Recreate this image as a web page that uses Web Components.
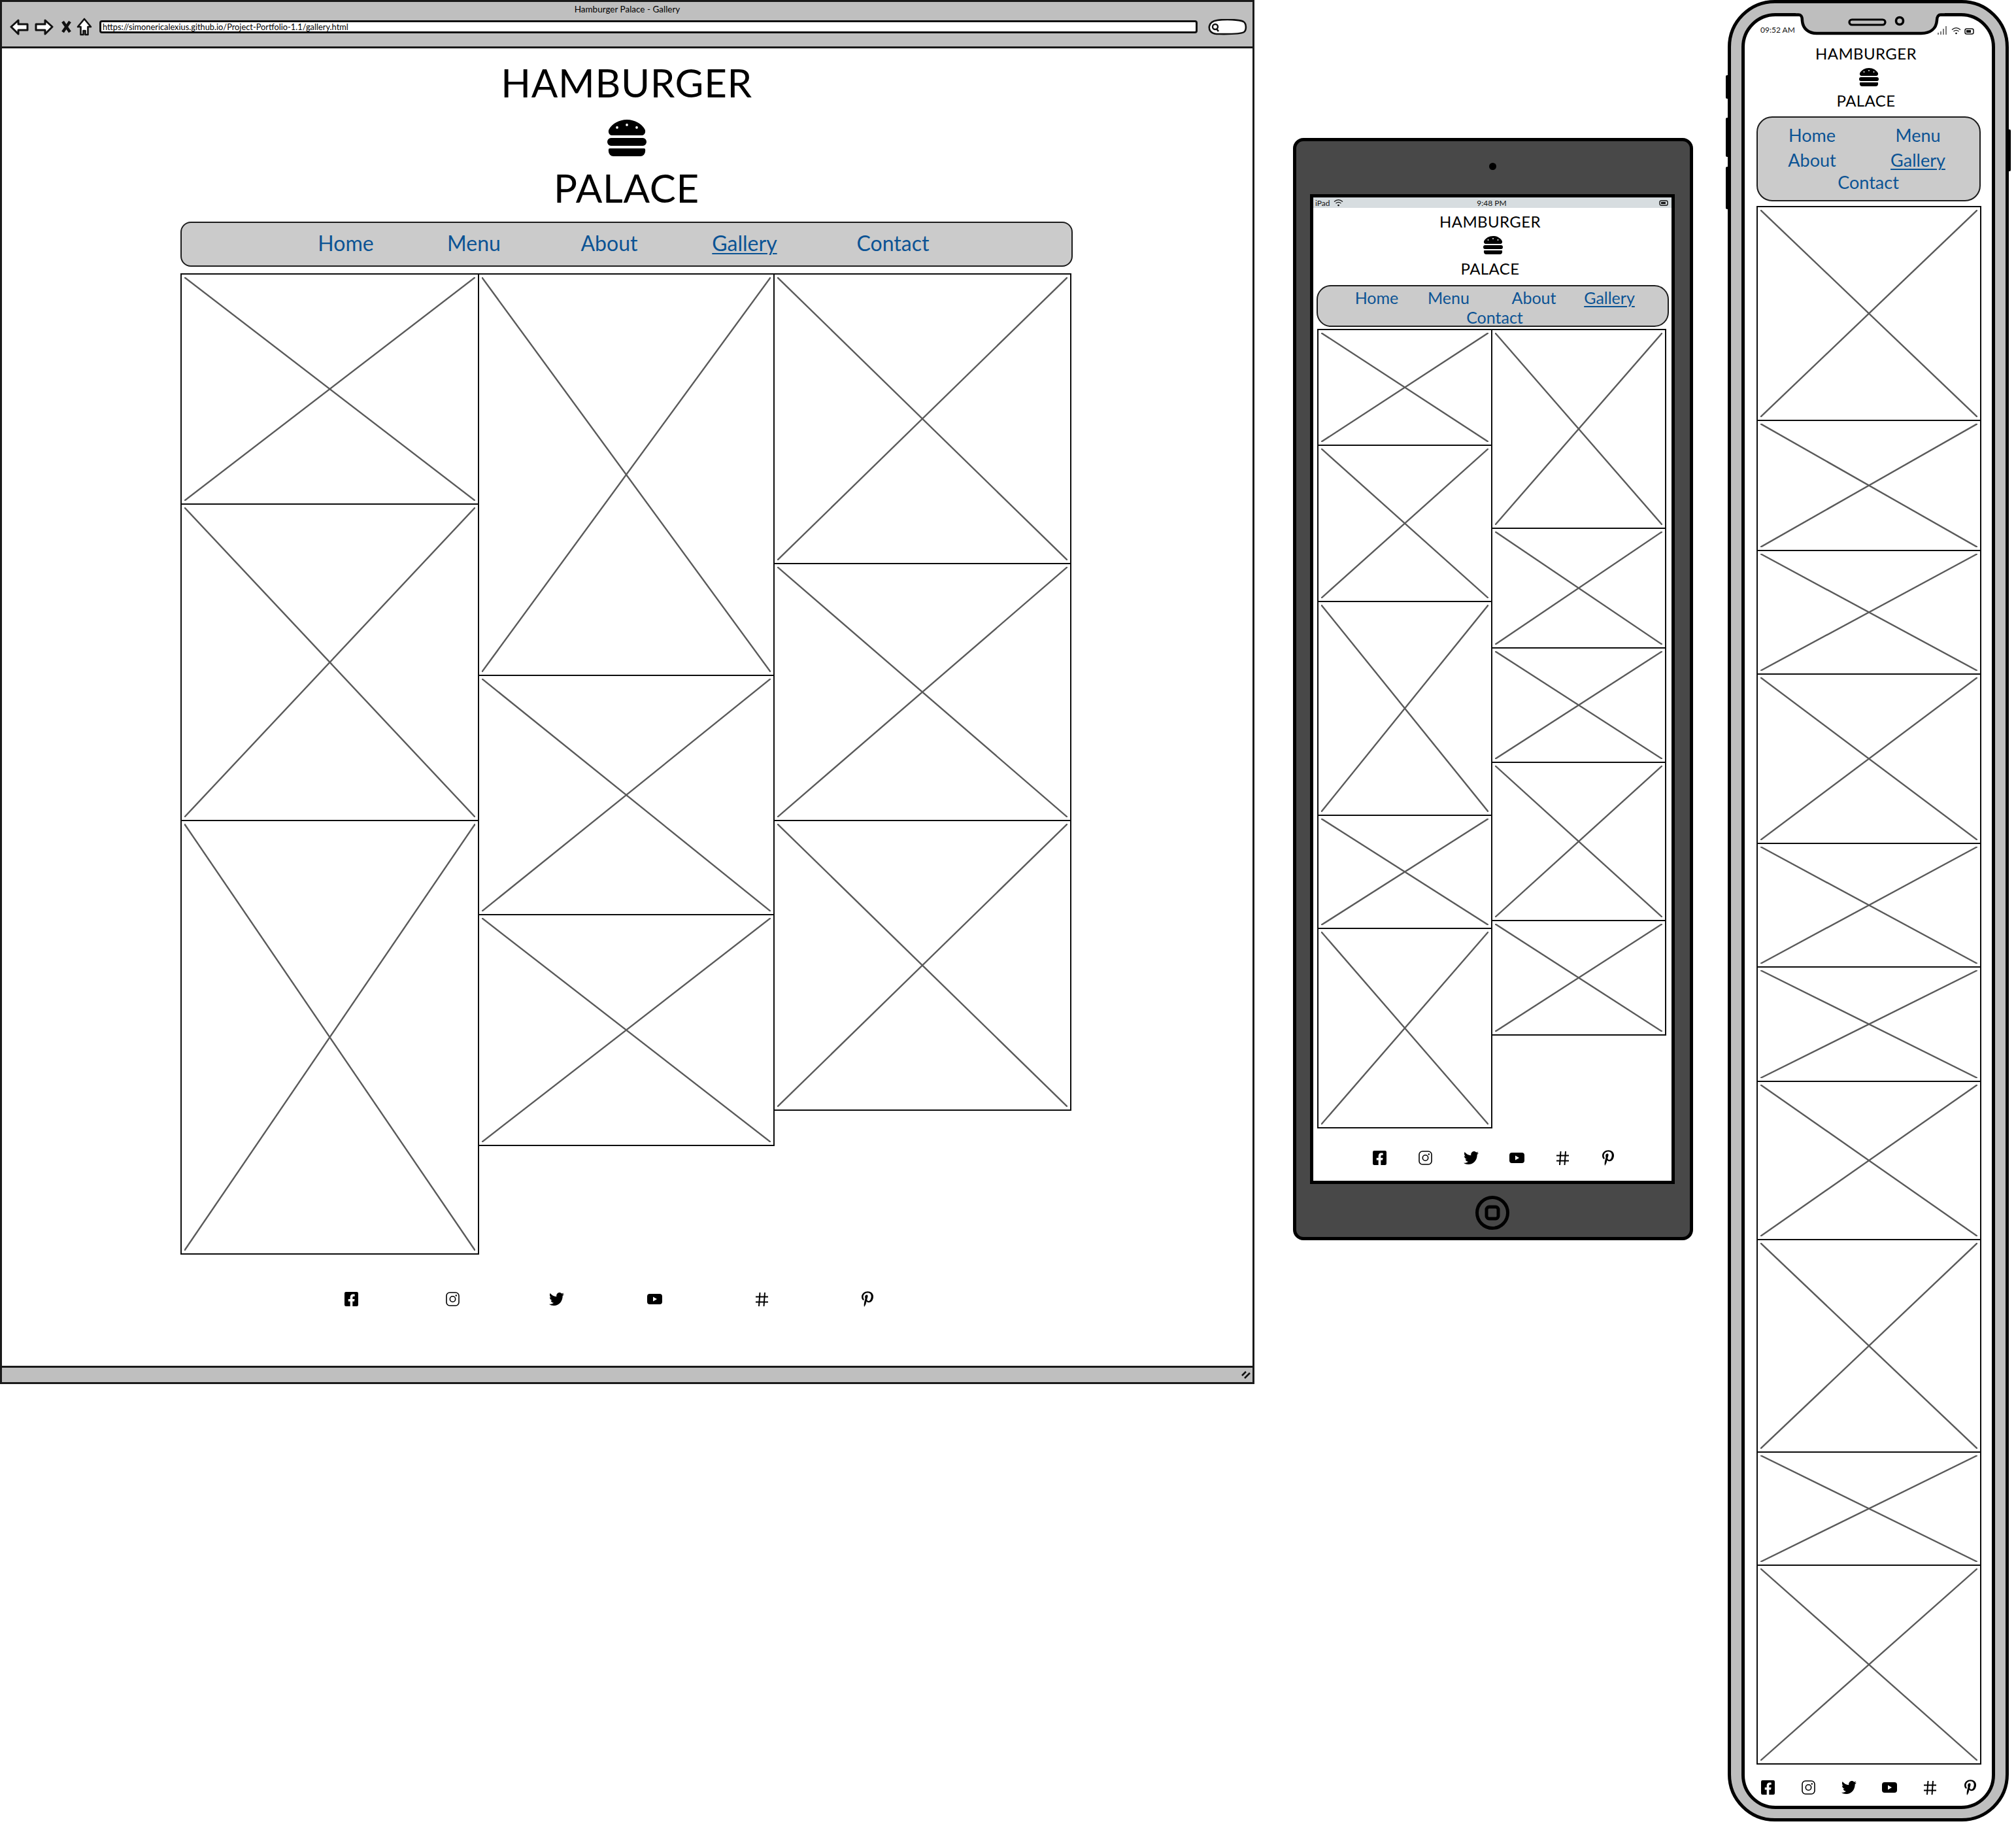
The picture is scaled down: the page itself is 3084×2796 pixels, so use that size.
<!DOCTYPE html>
<html lang="en">
<head>
<meta charset="utf-8">
<title>Hamburger Palace wireframes</title>
<style>
    html, body { margin: 0; padding: 0; background: #fff; }
    body { position: relative; width: 3084px; height: 2796px; overflow: hidden; font-family: "Lato", "Liberation Sans", sans-serif; color: #000; }

    .desktop {
        --title-size: 60px; --title-line: 80px; --title-space: 0.7px; --title-shift: 0px;
        --burger-w: 60px; --burger-h: 56px; --burger-gap: 17px; --burger-after: 8px;
        --header-top: 12px; --nav-gap: 12px;
        --nav-h: 69px; --nav-radius: 16px; --nav-size: 32px; --nav-pad: 153px; --nav-top: 0px;
        --nav-cols: 196px 196px 218px 196px 258px; --nav-rows: 62px;
        --grid-gap: 11px; --grid-inset: 1px;
        --social-gap: 57px; --social-left: 184px; --social-cols: 155px 155px 163px 137px 191px 131px;
    }
    .tablet {
        --title-size: 24px; --title-line: 32px; --title-space: 0.4px; --title-shift: 8px;
        --burger-w: 30px; --burger-h: 28px; --burger-gap: 6px; --burger-after: 6px;
        --header-top: 5px; --nav-gap: 9px;
        --nav-h: 64px; --nav-radius: 22px; --nav-size: 25px; --nav-pad: 40px; --nav-top: 3px;
        --nav-cols: 100px 120px 141px 90px; --nav-rows: 30px 30px;
        --grid-gap: 4px; --grid-inset: 2px;
        --social-gap: 34px; --social-left: 61px; --social-cols: repeat(6, 70px);
    }
    .phone {
        --title-size: 24px; --title-line: 32px; --title-space: 0.4px; --title-shift: 8px;
        --burger-w: 30px; --burger-h: 28px; --burger-gap: 6px; --burger-after: 6px;
        --header-top: 0px; --nav-gap: 8px;
        --nav-h: 130px; --nav-radius: 24px; --nav-size: 27px; --nav-pad: 2px; --nav-top: 8px;
        --nav-cols: 162px 162px; --nav-rows: 38px 38px 29px;
        --grid-gap: 8px; --grid-inset: 1px;
        --social-gap: 24px; --social-left: -14px; --social-cols: repeat(6, 62px);
    }
</style>
</head>
<body>

<template id="page-content">
    <site-header>
        <span slot="top">HAMBURGER</span>
        <span slot="bottom">PALACE</span>
    </site-header>
    <site-nav></site-nav>
    <photo-grid></photo-grid>
    <social-bar></social-bar>
</template>

<browser-frame class="desktop" style="left:0;top:0;width:1919px;height:2117px"
    heading="Hamburger Palace - Gallery" address="https://simonericalexius.github.io/Project-Portfolio-1.1/gallery.html">
    <site-page widths="455,452,454" columns="352,484,663|614,366,353|443,393,443"></site-page>
</browser-frame>

<tablet-frame class="tablet" style="left:1978px;top:211px;width:612px;height:1686px">
    <site-page widths="266,266" columns="177,239,327,173,305|304,183,175,242,175" wrap-last></site-page>
</tablet-frame>

<phone-frame class="phone" style="left:2643px;top:0;width:430px;height:2786px">
    <site-page widths="343" columns="327,199,189,259,189,175,242,325,173,304" wrap-last></site-page>
</phone-frame>

<script>
const BURGER = `<svg viewBox="0 32 512 448" preserveAspectRatio="none"><path d="M464 256H48a48 48 0 0 0 0 96h416a48 48 0 0 0 0-96zm16 128H32a16 16 0 0 0-16 16v16a64 64 0 0 0 64 64h352a64 64 0 0 0 64-64v-16a16 16 0 0 0-16-16zM58.64 224h394.72c34.57 0 54.62-43.9 34.82-75.88C448 83.2 359.55 32.1 256 32c-103.54.1-192 51.2-232.18 116.11C4 180.09 24.07 224 58.64 224zM384 112a16 16 0 1 1-16 16 16 16 0 0 1 16-16zM256 80a16 16 0 1 1-16 16 16 16 0 0 1 16-16zm-128 32a16 16 0 1 1-16 16 16 16 0 0 1 16-16z"/></svg>`;

const SOCIAL = {
    facebook: `<svg width="21" height="22" viewBox="0 32 448 448" preserveAspectRatio="none"><path d="M400 32H48A48 48 0 0 0 0 80v352a48 48 0 0 0 48 48h137.25V327.69h-63V256h63v-54.64c0-62.15 37-96.48 93.67-96.48 27.14 0 55.52 4.84 55.52 4.84v61h-31.27c-30.81 0-40.42 19.12-40.42 38.73V256h68.78l-11 71.69h-57.78V480H400a48 48 0 0 0 48-48V80a48 48 0 0 0-48-48z"/></svg>`,
    instagram: `<svg width="21" height="22" viewBox="0 0 21 22"><rect x="1" y="1" width="19" height="20" rx="5" fill="none" stroke="#000" stroke-width="1.6"/><circle cx="10.5" cy="11" r="4.2" fill="none" stroke="#000" stroke-width="1.6"/><circle cx="15.8" cy="5.5" r="1.2"/></svg>`,
    twitter: `<svg width="23" height="20" viewBox="0 48 512 416" preserveAspectRatio="none"><path d="M459.37 151.716c.325 4.548.325 9.097.325 13.645 0 138.72-105.583 298.558-298.558 298.558-59.452 0-114.68-17.219-161.137-47.106 8.447.974 16.568 1.299 25.34 1.299 49.055 0 94.213-16.568 130.274-44.832-46.132-.975-84.792-31.188-98.112-72.772 6.498.974 12.995 1.624 19.818 1.624 9.421 0 18.843-1.3 27.614-3.573-48.081-9.747-84.143-51.98-84.143-102.985v-1.299c13.969 7.797 30.214 12.67 47.431 13.319-28.264-18.843-46.781-51.005-46.781-87.391 0-19.492 5.197-37.36 14.294-52.954 51.655 63.675 129.3 105.258 216.365 109.807-1.624-7.797-2.599-15.918-2.599-24.04 0-57.828 46.782-104.934 104.934-104.934 30.213 0 57.502 12.67 76.67 33.137 23.715-4.548 46.456-13.32 66.599-25.34-7.798 24.366-24.366 44.833-46.132 57.827 21.117-2.273 41.584-8.122 60.426-16.243-14.292 20.791-32.161 39.308-52.628 54.253z"/></svg>`,
    youtube: `<svg width="23" height="16" viewBox="0 0 23 16"><path fill-rule="evenodd" d="M4 0h15a4 4 0 0 1 4 4v8a4 4 0 0 1-4 4H4a4 4 0 0 1-4-4V4a4 4 0 0 1 4-4zM9 4.6v6.8L15 8z"/></svg>`,
    hash: `<svg width="21" height="23" viewBox="0 0 21 23"><path d="M7.500 1 6 22M15 1l-1.500 21M1 7.500h19M1 15.500h19" fill="none" stroke="#000" stroke-width="2"/></svg>`,
    pinterest: `<svg width="18" height="24" viewBox="0 0 384 512"><path d="M204 6.500C101.400 6.500 0 74.900 0 185.600 0 256 39.600 296 63.600 296c9.900 0 15.600-27.600 15.600-35.400 0-9.300-23.700-29.100-23.700-67.800 0-80.400 61.200-137.400 140.400-137.400 68.100 0 118.500 38.700 118.500 109.800 0 53.100-21.300 152.700-90.300 152.700-24.900 0-46.200-18-46.200-43.800 0-37.800 26.400-74.400 26.400-113.400 0-66.200-93.900-54.200-93.900 25.800 0 16.800 2.100 35.400 9.600 50.700-13.800 59.400-42 147.900-42 209.100 0 18.900 2.700 37.500 4.500 56.400 3.400 3.800 1.700 3.400 6.900 1.500 50.400-69 48.600-82.500 71.400-172.800 12.300 23.400 44.100 36 69.300 36 106.200 0 153.900-103.500 153.900-196.800C384 71.300 298.200 6.500 204 6.500z"/></svg>`,
};

const NAV_LINKS = ['Home', 'Menu', 'About', 'Gallery', 'Contact'];

class SiteHeader extends HTMLElement {
    constructor() {
        super();
        this.attachShadow({ mode: 'open' });
        this.shadowRoot.innerHTML = `
            <style>
                :host {
                    display: flex;
                    flex-direction: column;
                    align-items: center;
                    padding-top: var(--header-top);
                    color: #000;
                    font-size: var(--title-size);
                    line-height: var(--title-line);
                    letter-spacing: var(--title-space);
                }
                .line { padding-right: var(--title-shift); }
                svg { display: block; width: var(--burger-w); height: var(--burger-h); margin: var(--burger-gap) 0 var(--burger-after); }
            </style>
            <div class="line"><slot name="top"></slot></div>
            ${BURGER}
            <div class="line"><slot name="bottom"></slot></div>`;
    }
}

class SiteNav extends HTMLElement {
    constructor() {
        super();
        this.attachShadow({ mode: 'open' });
        this.shadowRoot.innerHTML = `
            <style>
                :host {
                    display: block;
                    box-sizing: border-box;
                    height: var(--nav-h);
                    margin-top: var(--nav-gap);
                    padding: var(--nav-top) 0 0 var(--nav-pad);
                    background: #cbcbcb;
                    border: 2.5px solid #1c1c1c;
                    border-radius: var(--nav-radius);
                }
                nav {
                    display: grid;
                    grid-template-columns: var(--nav-cols);
                    grid-auto-rows: var(--nav-rows);
                    align-items: center;
                    justify-items: center;
                    font-size: var(--nav-size);
                }
                a { color: #0b5394; text-decoration: none; line-height: 1.1; }
                a.current { text-decoration: underline; text-underline-offset: 3px; text-decoration-thickness: 2px; }
                :host([wrap-last]) a.last { grid-column: 1 / -1; padding-left: 10px; }
            </style>
            <nav>${NAV_LINKS.map((label) => {
                const cls = label === 'Gallery' ? 'current' : label === 'Contact' ? 'last' : '';
                return `<a href="#" class="${cls}">${label}</a>`;
            }).join('')}</nav>`;
    }
}

class PhotoTile extends HTMLElement {
    constructor() {
        super();
        this.attachShadow({ mode: 'open' });
        this.shadowRoot.innerHTML = `
            <style>
                :host {
                    display: block;
                    flex: none;
                    box-sizing: border-box;
                    margin: -1px;
                    padding: 4px;
                    background: #fff;
                    border: 2px solid #0c0c0c;
                }
                svg { display: block; width: 100%; height: 100%; }
                line { stroke: #5a5a5a; stroke-width: 2.4; vector-effect: non-scaling-stroke; }
            </style>
            <svg viewBox="0 0 100 100" preserveAspectRatio="none">
                <line x1="0" y1="0" x2="100" y2="100"></line>
                <line x1="100" y1="0" x2="0" y2="100"></line>
            </svg>`;
    }
}

class PhotoGrid extends HTMLElement {
    constructor() {
        super();
        this.attachShadow({ mode: 'open' });
        this.shadowRoot.innerHTML = `
            <style>
                :host {
                    display: flex;
                    align-items: flex-start;
                    margin: var(--grid-gap) 0 0 var(--grid-inset);
                }
                .col { display: flex; flex-direction: column; }
            </style>`;
    }

    render(widths, columns) {
        columns.forEach((heights, i) => {
            const col = document.createElement('div');
            col.className = 'col';
            col.style.width = widths[i] + 'px';
            heights.forEach((h) => {
                const tile = document.createElement('photo-tile');
                tile.style.height = (h + 2) + 'px';
                col.appendChild(tile);
            });
            this.shadowRoot.appendChild(col);
        });
    }
}

class SocialBar extends HTMLElement {
    constructor() {
        super();
        this.attachShadow({ mode: 'open' });
        this.shadowRoot.innerHTML = `
            <style>
                :host {
                    display: grid;
                    grid-template-columns: var(--social-cols);
                    margin: var(--social-gap) 0 0 var(--social-left);
                    height: 24px;
                    align-items: center;
                    justify-items: center;
                }
                svg { display: block; }
            </style>
            ${Object.values(SOCIAL).join('')}`;
    }
}

class SitePage extends HTMLElement {
    constructor() {
        super();
        this.attachShadow({ mode: 'open' });
        this.shadowRoot.innerHTML = `<style>:host { display: block; }</style>`;
        this.shadowRoot.appendChild(document.getElementById('page-content').content.cloneNode(true));
    }

    connectedCallback() {
        const widths = this.getAttribute('widths').split(',').map(Number);
        const columns = this.getAttribute('columns').split('|').map((c) => c.split(',').map(Number));
        this.shadowRoot.querySelector('photo-grid').render(widths, columns);
        if (this.hasAttribute('wrap-last')) {
            this.shadowRoot.querySelector('site-nav').setAttribute('wrap-last', '');
        }
    }
}

class BrowserFrame extends HTMLElement {
    constructor() {
        super();
        this.attachShadow({ mode: 'open' });
        this.shadowRoot.innerHTML = `
            <style>
                :host {
                    position: absolute;
                    display: flex;
                    flex-direction: column;
                    box-sizing: border-box;
                    background: #fff;
                    border: 3px solid #1a1a1a;
                }
                .top {
                    height: 71px;
                    box-sizing: border-box;
                    background: #bfbfbf;
                    border-bottom: 3px solid #1a1a1a;
                }
                .title { height: 20px; line-height: 22px; text-align: center; font-size: 13.5px; }
                .tools { display: flex; align-items: center; height: 36px; padding: 0 8px 0 12px; }
                .tools svg { display: block; flex: none; }
                .address {
                    flex: 1;
                    height: 20px;
                    margin: 0 16px 0 11px;
                    padding-left: 2px;
                    box-sizing: border-box;
                    background: #fff;
                    border: 3px solid #111;
                    border-radius: 4px;
                    font-size: 12.8px;
                    line-height: 14px;
                    white-space: nowrap;
                }
                .content { flex: 1; padding: 0 275px 0 273px; }
                .bottom {
                    display: flex;
                    justify-content: flex-end;
                    align-items: center;
                    height: 22px;
                    padding-right: 3px;
                    background: #bfbfbf;
                    border-top: 3px solid #1a1a1a;
                }
            </style>
            <div class="top">
                <div class="title"></div>
                <div class="tools">
                    <svg width="29" height="26" viewBox="0 0 29 26" style="margin-right:9px"><path d="M2 13 13 3v6h14v9H13v6z" fill="#fff" stroke="#111" stroke-width="3" stroke-linejoin="round"/></svg>
                    <svg width="29" height="26" viewBox="0 0 29 26" style="margin-right:12px"><path d="M27 13 16 3v6H2v9h14v6z" fill="#fff" stroke="#111" stroke-width="3" stroke-linejoin="round"/></svg>
                    <svg width="15" height="20" viewBox="0 0 15 20" style="margin-right:8px"><path d="M2 2l11 16M13 2 2 18" stroke="#111" stroke-width="4.500" fill="none"/></svg>
                    <svg width="24" height="28" viewBox="0 0 24 28"><path d="M12 2 2 14h4.500v12h4v-6h3v6h4V14H22z" fill="#fff" stroke="#111" stroke-width="2.600" stroke-linejoin="round"/></svg>
                    <div class="address"></div>
                    <svg width="60" height="25" viewBox="0 0 60 25"><path d="M14 2C28 0 48 1 54 4c5 3 5 13 1 16-6 4-32 3-42 3C4 22 1 17 2 11 3 6 7 3 14 2z" fill="#fff" stroke="#111" stroke-width="2.600"/><circle cx="11" cy="12" r="4" fill="#fff" stroke="#111" stroke-width="2.400"/><path d="m13 15 3 4" stroke="#111" stroke-width="2.600"/></svg>
                </div>
            </div>
            <div class="content"><slot></slot></div>
            <div class="bottom">
                <svg width="14" height="12" viewBox="0 0 14 12"><path d="M1 7 7 1M5 11l8-8" stroke="#111" stroke-width="2.600" fill="none"/></svg>
            </div>`;
    }

    connectedCallback() {
        this.shadowRoot.querySelector('.title').textContent = this.getAttribute('heading');
        this.shadowRoot.querySelector('.address').textContent = this.getAttribute('address');
    }
}

class TabletFrame extends HTMLElement {
    constructor() {
        super();
        this.attachShadow({ mode: 'open' });
        this.shadowRoot.innerHTML = `
            <style>
                :host {
                    position: absolute;
                    display: flex;
                    flex-direction: column;
                    box-sizing: border-box;
                    padding: 0 23px 0 21px;
                    background: #484848;
                    border: 5px solid #000;
                    border-radius: 16px;
                }
                .cam-row { display: flex; justify-content: center; align-items: center; height: 76px; padding-bottom: 5px; box-sizing: content-box; }
                .cam { width: 11px; height: 11px; border-radius: 50%; background: #000; }
                .screen {
                    box-sizing: border-box;
                    height: 1514px;
                    background: #fff;
                    border: 5px solid #000;
                }
                .status {
                    display: grid;
                    grid-template-columns: 1fr auto 1fr;
                    align-items: center;
                    height: 16px;
                    padding: 0 5px 0 3px;
                    background: #d7dde0;
                    font-size: 12px;
                    color: #111;
                }
                .status .left { display: flex; align-items: center; gap: 5px; }
                .status svg { display: block; }
                .status .right { justify-self: end; }
                .page { padding: 0 4px 0 5px; }
                .home-row { flex: 1; display: flex; justify-content: center; align-items: center; padding-top: 6px; }
            </style>
            <div class="cam-row"><div class="cam"></div></div>
            <div class="screen">
                <div class="status">
                    <div class="left">iPad
                        <svg width="15" height="12" viewBox="0 0 15 12"><path d="M1 4.500C5 1 10 1 14 4.500M3.500 7c2.500-2 5.500-2 8 0" fill="none" stroke="#111" stroke-width="1.200"/><circle cx="7.500" cy="10" r="1.300"/></svg>
                    </div>
                    <div>9:48 PM</div>
                    <svg class="right" width="14" height="9" viewBox="0 0 14 9"><rect x="1" y="1" width="12" height="7" rx="2" fill="none" stroke="#111" stroke-width="1.400"/><rect x="3" y="3" width="7" height="3" fill="#111"/></svg>
                </div>
                <div class="page"><slot></slot></div>
            </div>
            <div class="home-row">
                <svg width="52" height="52" viewBox="0 0 52 52"><circle cx="26" cy="26" r="23.500" fill="none" stroke="#000" stroke-width="5"/><rect x="17" y="17" width="18" height="18" rx="4" fill="none" stroke="#000" stroke-width="5"/></svg>
            </div>`;
    }
}

class PhoneFrame extends HTMLElement {
    constructor() {
        super();
        this.attachShadow({ mode: 'open' });
        this.shadowRoot.innerHTML = `
            <style>
                :host {
                    position: absolute;
                    display: block;
                    box-sizing: border-box;
                    padding: 15px 16px 14px;
                    background: #bebebe;
                    border: 5px solid #000;
                    border-radius: 72px;
                }
                .screen {
                    box-sizing: border-box;
                    height: 100%;
                    padding: 0 17px 0 18px;
                    background: #fff;
                    border: 5px solid #000;
                    border-radius: 52px;
                }
                .status {
                    display: flex;
                    justify-content: space-between;
                    align-items: center;
                    height: 41px;
                    padding: 0 10px 0 6px;
                    box-sizing: border-box;
                    font-size: 12px;
                    color: #111;
                }
                .status svg { display: block; }
                .glyphs { display: flex; gap: 5px; align-items: flex-end; }
                .notch { position: absolute; left: 99px; top: 15px; }
                .key { position: absolute; width: 5px; background: #000; border-radius: 2px; }
            </style>
            <div class="key" style="left:-8px;top:110px;height:36px"></div>
            <div class="key" style="left:-8px;top:175px;height:60px"></div>
            <div class="key" style="left:-8px;top:250px;height:65px"></div>
            <div class="key" style="right:-8px;top:193px;height:64px"></div>
            <svg class="notch" width="228" height="36" viewBox="0 0 228 36">
                <path d="M0 2.500H4C9 2.500 10 6 10 12 11 24 20 31 32 31H192C206 31 215 24 216 11 216 6 218 2.500 222 2.500H228V0H0z" fill="#bebebe" stroke="none"/>
                <path d="M0 2.500H4C9 2.500 10 6 10 12 11 24 20 31 32 31H192C206 31 215 24 216 11 216 6 218 2.500 222 2.500H228" fill="none" stroke="#000" stroke-width="4.500"/>
                <rect x="82" y="10" width="55" height="8" rx="4" fill="none" stroke="#000" stroke-width="3.200"/>
                <circle cx="159" cy="12" r="5.500" fill="none" stroke="#000" stroke-width="3.600"/>
            </svg>
            <div class="screen">
                <div class="status">
                    <span>09:52 AM</span>
                    <div class="glyphs">
                        <svg width="16" height="14" viewBox="0 0 16 14"><path d="M1 14v-3M5 14V9M9 14V5M13 14V1" stroke="#333" stroke-width="1.300" fill="none"/></svg>
                        <svg width="15" height="12" viewBox="0 0 15 12"><path d="M1 4.500C5 1 10 1 14 4.500M3.500 7c2.500-2 5.500-2 8 0" fill="none" stroke="#111" stroke-width="1.200"/><circle cx="7.500" cy="10" r="1.300"/></svg>
                        <svg width="15" height="10" viewBox="0 0 15 10"><rect x="1" y="1" width="13" height="8" rx="2.500" fill="none" stroke="#111" stroke-width="1.500"/><rect x="3" y="3" width="7" height="4" fill="#111"/></svg>
                    </div>
                </div>
                <slot></slot>
            </div>`;
    }
}

customElements.define('site-header', SiteHeader);
customElements.define('site-nav', SiteNav);
customElements.define('photo-tile', PhotoTile);
customElements.define('photo-grid', PhotoGrid);
customElements.define('social-bar', SocialBar);
customElements.define('site-page', SitePage);
customElements.define('browser-frame', BrowserFrame);
customElements.define('tablet-frame', TabletFrame);
customElements.define('phone-frame', PhoneFrame);
</script>
</body>
</html>
